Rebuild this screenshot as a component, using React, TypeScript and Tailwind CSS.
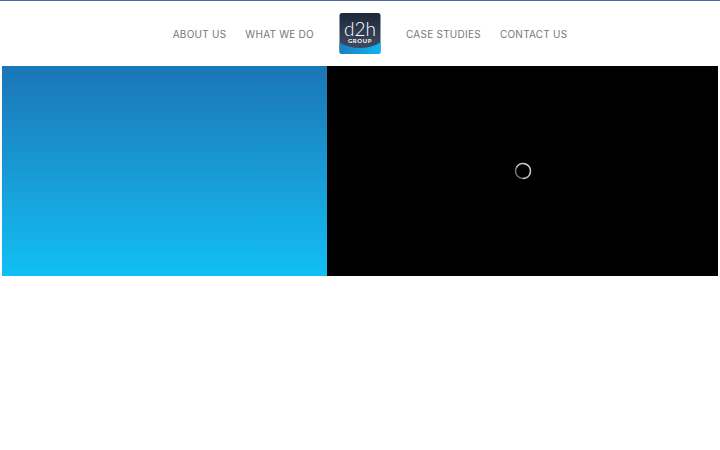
const leftLinks = [
  { label: "ABOUT US", href: "#about" },
  { label: "WHAT WE DO", href: "#what-we-do" },
];

const rightLinks = [
  { label: "CASE STUDIES", href: "#case-studies" },
  { label: "CONTACT US", href: "#contact" },
];

function NavLink({ label, href }: { label: string; href: string }) {
  return (
    <li>
      <a href={href} className="whitespace-nowrap hover:text-[#1b78b8]">
        {label}
      </a>
    </li>
  );
}

function Logo() {
  return (
    <svg viewBox="0 0 42 42" className="size-[42px]" role="img" aria-label="d2h Group">
      <defs>
        <linearGradient id="logo-dark" x1="0" y1="0" x2="0" y2="1">
          <stop offset="0" stopColor="#1d293a" />
          <stop offset="1" stopColor="#465169" />
        </linearGradient>
        <linearGradient id="logo-blue" x1="0" y1="0" x2="1" y2="0">
          <stop offset="0" stopColor="#1a80c0" />
          <stop offset="1" stopColor="#0fb4f2" />
        </linearGradient>
        <clipPath id="logo-shape">
          <rect x="0.5" width="41" height="41" rx="2.5" />
        </clipPath>
      </defs>
      <g clipPath="url(#logo-shape)">
        <rect width="42" height="42" fill="url(#logo-dark)" />
        <path d="M0 29C12 37 30 37 42 29V42H0Z" fill="url(#logo-blue)" />
      </g>
      {/* wordmark */}
      <g fill="#ffffff" fontFamily="Lato, sans-serif" textAnchor="middle">
        <text x="21" y="23" fontSize="19" fontWeight="300" className="tracking-normal">
          d2h
        </text>
        <text x="21" y="30" fontSize="6" fontWeight="700" className="tracking-widest">
          GROUP
        </text>
      </g>
    </svg>
  );
}

function Spinner() {
  return (
    <svg viewBox="0 0 18 18" className="size-[18px]" fill="none" role="img" aria-label="Loading">
      <circle cx="9" cy="9" r="7.5" stroke="#777777" strokeWidth="1.5" />
      <path d="M2.5 5.3A7.5 7.5 0 1 1 9 16.5" stroke="#c4c4c4" strokeWidth="1.5" />
    </svg>
  );
}

export default function App() {
  return (
    <div className="min-h-screen border-t border-[#4a68a5] bg-white font-['Inter',sans-serif]">
      <header className="pt-3 pb-[11px]">
        <nav className="grid grid-cols-[1fr_auto_1fr] items-center gap-[25px] text-[10px] leading-4 tracking-wide text-[#777777]">
          <ul className="flex justify-end gap-[19px]">
            {leftLinks.map((link) => (
              <NavLink key={link.label} {...link} />
            ))}
          </ul>
          <a href="#home">
            <Logo />
          </a>
          <ul className="flex gap-[19px]">
            {rightLinks.map((link) => (
              <NavLink key={link.label} {...link} />
            ))}
          </ul>
        </nav>
      </header>
      <main className="px-0.5">
        <section className="grid h-[210px] grid-cols-[5fr_6fr]">
          <div className="bg-linear-to-b from-[#1b76b6] to-[#10bff4]"></div>
          <div className="flex items-center justify-center bg-black">
            <Spinner />
          </div>
        </section>
      </main>
    </div>
  );
}
